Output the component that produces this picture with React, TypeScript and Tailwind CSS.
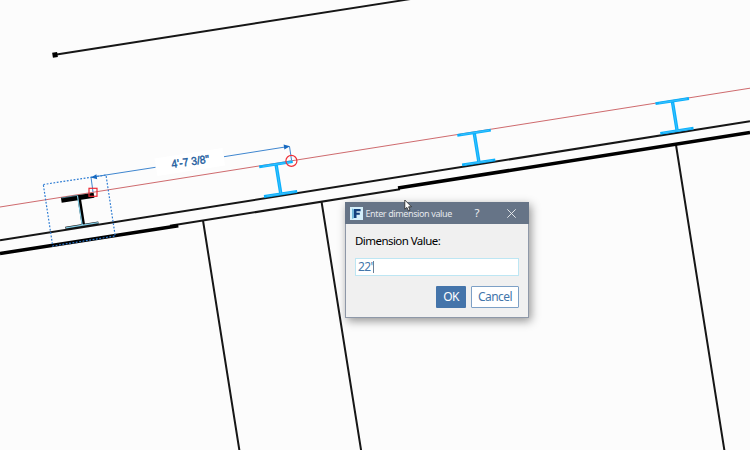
import React from "react";

const beams = [
  { x: 0, y: 0 },
  { x: -198.2, y: 31.6 },
  { x: -396.3, y: 63.2 },
];

function Beam({ x, y }: { x: number; y: number }) {
  return (
    <g transform={`translate(${x} ${y})`} stroke="#0ab0fc">
      <path d="M655.5 103.7L689 98.5M660.3 133.3L693.5 128.2" strokeWidth="2.8" />
      <path d="M672.4 101.5L677.2 131" strokeWidth="3.4" />
      <path d="M672.6 103L677 130M659 103.2L687 98.8M663 132.9L691 128.6" stroke="#5cc9fb" strokeWidth="0.6" />
    </g>
  );
}

function Drawing() {
  return (
    <svg className="block h-[450px] w-[750px]" viewBox="0 0 750 450" fill="none">
      <path d="M55 54.8L412 -1.2" stroke="#161616" strokeWidth="1.9" />
      <rect x="52.5" y="52.3" width="5" height="5" fill="#000" transform="rotate(-9 55 54.8)" />

      <g stroke="#161616" strokeWidth="2">
        <path d="M0 240.3L750 121.2" />
        <path d="M170 225.7L400 189.2" />
        <path d="M203 220.5L239.5 451M321.5 201.5L361.2 451M676 145L724.5 451" />
      </g>
      <path d="M0 253.4L178.3 225.7M398 188L750 132.6" stroke="#000" strokeWidth="3.5" />
      <path d="M0 207L750 88.2" stroke="#cb6265" strokeWidth="0.95" />

      {beams.map((b) => (
        <Beam key={b.x} x={b.x} y={b.y} />
      ))}

      <path d="M61.3 200.3L94 195.2" stroke="#000" strokeWidth="5" />
      <path d="M79 197L83.4 225" stroke="#000" strokeWidth="3.4" />
      <path d="M65.5 228.3L98.5 223" stroke="#111" strokeWidth="3" />
      <path d="M77.5 196L82.2 225M66 227.9L98.3 222.7" stroke="#86cfe8" strokeWidth="1.2" />
      <path d="M61.5 198L78 195.3" stroke="#5a9db5" strokeWidth="0.7" />

      <path d="M43.3 184.5L106 175L115.2 236L52.7 246Z" stroke="#2d7cd3" strokeWidth="1.2" strokeDasharray="1.8 1.6" />

      <path d="M91 177.3L155.5 167.3M224 156.7L289 146.4M91 177.3L93 192M289.5 146.4L291.5 160" stroke="#3f86cf" strokeWidth="1" />
      <path d="M91 177.6L96.4 174.3L97.2 179.2ZM290 146.2L283.6 144.6L284.4 149.4Z" fill="#1769c0" />
      <path d="M154.5 158.5L222.5 148L225 165.5L157.5 176Z" fill="#fff" />
      <text
        x="190.3"
        y="165.4"
        textAnchor="middle"
        transform="rotate(-8 190.3 161.5)"
        fill="#265f9f"
        stroke="#265f9f"
        strokeWidth="0.45"
        textLength="38"
        lengthAdjust="spacingAndGlyphs"
        className="font-['Liberation_Sans',sans-serif] text-[11.3px]"
      >
        4'-7 3/8"
      </text>

      <rect x="89" y="188.3" width="8" height="8" stroke="#ec2a35" strokeWidth="1.2" />
      <circle cx="291.4" cy="160.9" r="5.5" stroke="#ee3038" strokeWidth="1.2" />
    </svg>
  );
}

function Dialog() {
  return (
    <div className="absolute left-[345px] top-[202px] flex h-[116px] w-[184px] flex-col border border-[#8e98a8] bg-[#f0f0f0] font-['Noto_Sans',sans-serif] shadow-[2px_3px_9px_rgba(0,0,0,0.42)]">
      <div className="-mx-px -mt-px flex h-[22px] shrink-0 items-center bg-[#667487] pl-[5px]">
        <svg className="h-[13px] w-[13px]" viewBox="0 0 13 13">
          <rect width="13" height="13" fill="#d5effa" />
          <path d="M2 1.5L4 2.5V11L2 12Z" fill="#72b7da" />
          <path d="M4 2H10.6V4.2H6.5V5.8H9.8V7.8H6.5V11H4Z" fill="#123f7c" />
        </svg>
        <span className="ml-[2.5px] w-[100.5px] whitespace-nowrap text-[9px] leading-none tracking-[-0.38px] text-[#e4e7ec]">Enter dimension value</span>
        <span className="ml-[7px] w-[8px] text-center text-[11.5px] leading-none text-[#eef0f3]">?</span>
        <svg className="ml-[26px] h-[9px] w-[9px]" viewBox="0 0 9 9">
          <path d="M0.3 0.3L8.7 8.7M8.7 0.3L0.3 8.7" stroke="#eef0f3" strokeWidth="0.9" />
        </svg>
      </div>
      <div className="flex flex-col px-[9px] pt-[10px]">
        <label className="text-[11.5px] leading-[14px] tracking-[-0.55px] text-black">Dimension Value:</label>
        <div className="mt-[10px] flex h-[18px] items-center border border-[#bde6f3] bg-white pl-[2px] text-[12px] leading-none tracking-[-0.6px] text-[#4376ab]">
          22'<span className="h-[12px] w-px bg-[#6b7f96]" />
        </div>
        <div className="mt-[10px] flex justify-end gap-[5px] text-[12px] leading-none tracking-[-0.55px]">
          <button className="h-[22px] w-[30px] rounded-[1px] bg-[#4474aa] text-white">OK</button>
          <button className="h-[22px] w-[48px] rounded-[1px] border border-[#7da0c6] bg-white text-[#4376ab]">Cancel</button>
        </div>
      </div>
    </div>
  );
}

export default function App() {
  return (
    <div className="relative h-[450px] w-[750px] overflow-hidden bg-[#fcfcfc]">
      <Drawing />
      <Dialog />
      <svg className="absolute left-[404px] top-[199px] h-[13px] w-[9px]" viewBox="0 0 9 13">
        <path d="M0.8 1V10.2L2.9 8.4L4.4 11.8L6 11.1L4.6 7.8H7.5Z" fill="#fff" stroke="#222" strokeWidth="0.8" />
      </svg>
    </div>
  );
}
